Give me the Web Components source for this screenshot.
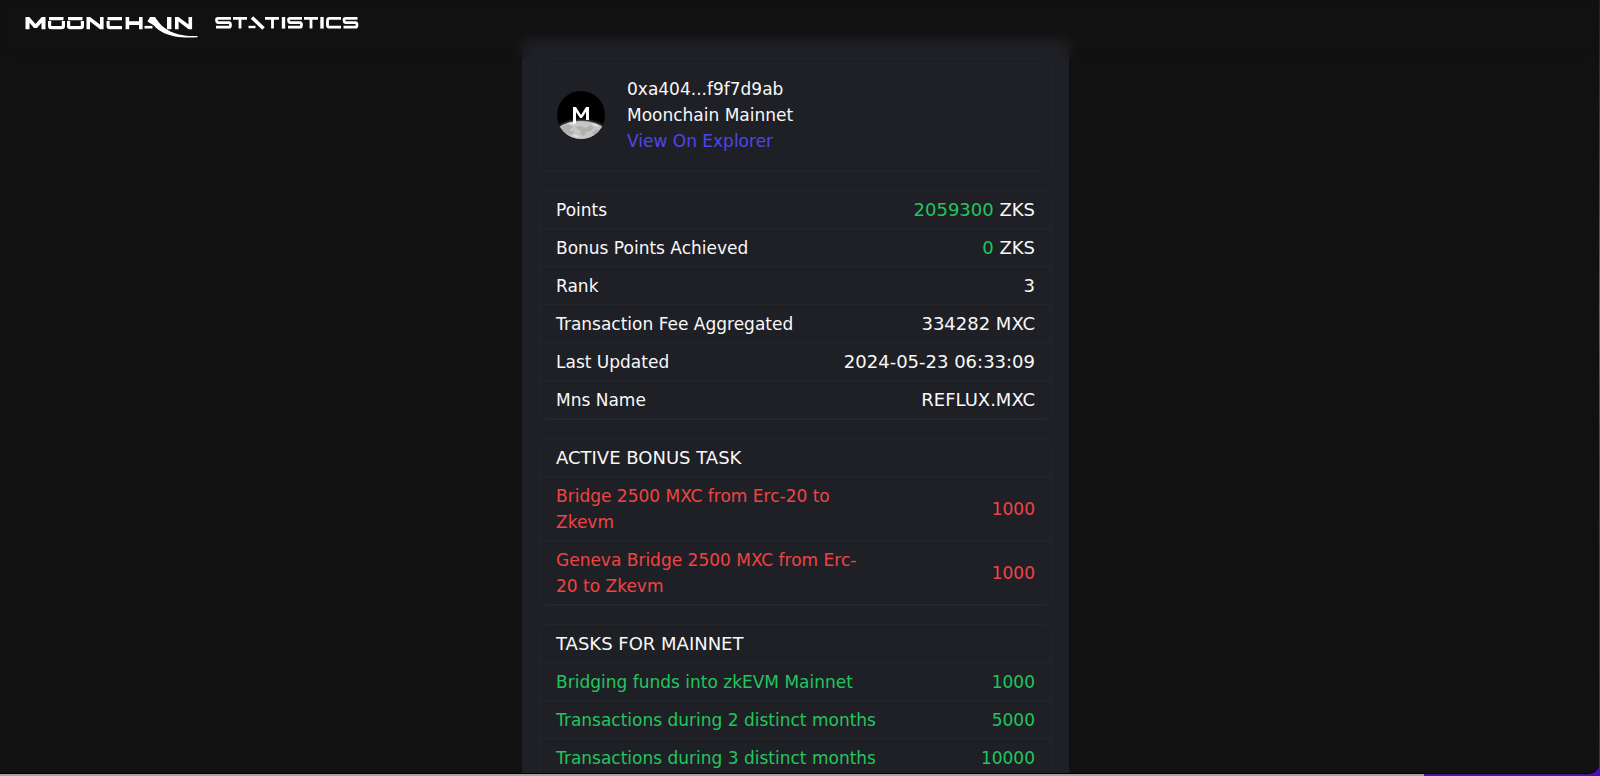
<!DOCTYPE html>
<html lang="en">
<head>
<meta charset="utf-8">
<title>Moonchain Statistics</title>
<style>
  html, body { margin: 0; height: 100%; }
  body {
    overflow: hidden;
    font-family: "DejaVu Sans", Verdana, sans-serif;
    color: #f8f8f9;
    background:
      linear-gradient(to right, #a5a3a5 89%, #4a12a8 89%) bottom / 100% 3px no-repeat,
      linear-gradient(#2a1a20, #8a5068 40%, #6a2880 60%, #4a10c0);
  }
</style>
</head>
<body>
<stats-app></stats-app>

<script>
const define = (name, html) => {
  const template = document.createElement('template');
  template.innerHTML = html;
  customElements.define(name, class extends HTMLElement {
    constructor() {
      super();
      this.attachShadow({ mode: 'open' }).append(template.content.cloneNode(true));
    }
  });
};

/* Wordmark: extended techno lettering with a tail sweeping from the A */
define('brand-logo', `
  <style>
    :host { display: block; }
    svg { display: block; width: 340px; height: 28px; overflow: visible; }
  </style>
  <svg viewBox="0 0 340 28" role="img" aria-label="Moonchain Statistics" fill="none" stroke="#fff">
    <path fill="#fff" stroke="none" d="M1.500 13.200V1h3.800l6.200 7L17.700 1h3.800v12.200h-4V6.800l-4.500 5.200h-3L5.500 6.800v6.400z"/>
    <g stroke-width="3.200">
      <path d="M25 2.600h14.500M25.600 5v5q0 1.600 1.800 1.600h10.200q1.800 0 1.800-1.600V5"/>
      <path d="M44 2.600h14.500M44.600 5v5q0 1.600 1.800 1.600h10.200q1.800 0 1.800-1.600V5"/>
      <path d="M98 2.600H83.500M84.100 5v5q0 1.600 1.800 1.600H98"/>
      <path d="M103.400 1v12.200M116.800 1v12.200M103 7.100h14" stroke-width="3.600"/>
      <path d="M120.500 11.200h8" stroke-width="2.600"/>
      <path d="M145.200 1v12.200" stroke-width="4.400"/>
    </g>
    <g fill="#fff" stroke="none">
      <path d="M62.500 13.200V1h3.500l10 7.600V1h3.600v12.200h-3.500L66 5.600v7.600z"/>
      <path d="M151 13.200V1h3.500l10 7.600V1h3.600v12.200h-3.500l-10-7.600v7.600z"/>
      <path d="M126 1h5c6 10 17 20 42.500 19v1.200c-27 2.200-39-6-43.500-11.700L123.500 5.500z"/>
    </g>
    <g stroke-width="2.800">
      <path d="M207 2.400h-13q-1.500 0-1.500 1.900t1.500 2.300h11q1.500 0 1.500 2.300t-1.500 2.300H192"/>
      <path d="M209 2.400h14M216 2v10.600"/>
      <path d="M224.500 11h7" stroke-width="2.400"/><path d="M228 1.500l11.500 11" stroke-width="3.600"/>
      <path d="M241 2.400h14M248.500 2v10.600"/>
      <path d="M259.500 1v11.600" stroke-width="3.400"/>
      <path d="M278 2.400h-12q-1.500 0-1.500 1.900t1.500 2.300h10q1.500 0 1.500 2.300t-1.500 2.300H264"/>
      <path d="M280 2.400h14M287 2v10.600"/>
      <path d="M298 1v11.600" stroke-width="3.400"/>
      <path d="M317 2.400h-11.500q-2 0-2 2v4.800q0 2 2 2H317"/>
      <path d="M333.500 2.400h-12q-1.500 0-1.500 1.900t1.500 2.300h10q1.500 0 1.500 2.300t-1.500 2.300H319.500"/>
    </g>
  </svg>
`);

/* Round network picture: the letter M above a moon horizon */
define('moon-avatar', `
  <style>
    :host { display: block; }
    svg { display: block; width: 48px; height: 48px; }
  </style>
  <svg viewBox="0 0 48 48" aria-hidden="true">
    <defs>
      <clipPath id="disc"><circle cx="24" cy="24" r="24"/></clipPath>
      <filter id="glow"><feGaussianBlur stdDeviation="1.500"/></filter>
    </defs>
    <g clip-path="url(#disc)">
      <path fill="#000" d="M0 0h48v48H0z"/>
      <ellipse cx="24" cy="58" rx="36" ry="28.500" fill="#999" filter="url(#glow)"/>
      <ellipse cx="24" cy="58" rx="36" ry="28" fill="#c6c6c6"/>
      <path fill="#b0b0b0" d="M5 36l6-3 5 3-4 3 6 2-5 3-8-4zM19 36l5-1 5 2 4-3 4 2-3 4-5 1-2 4-4-2 1-3-5-3zM35 42l5-4 4 2-6 6z"/>
      <path fill="#dcdcdc" d="M10 32l7-1 2 2-6 1zM34 32l6 1 2 3-5-1zM17 43l5 2-1 2-5-2z"/>
      <path fill="#fff" d="M16 34V16h3l5 8 5-8h3v13h-3v-8l-4 6h-2l-4-6v11z"/>
    </g>
  </svg>
`);

define('site-header', `
  <style>
    :host {
      display: block; position: absolute; inset: 0 0 auto 0; z-index: 1;
      box-sizing: border-box; height: 59px; padding: 16px 24px;
      backdrop-filter: blur(6px);
    }
    a { display: inline-block; color: inherit; }
  </style>
  <header><a href="#" aria-label="Moonchain Statistics"><brand-logo></brand-logo></a></header>
`);

define('info-card', `
  <style>
    :host {
      display: block; border: 1px solid #26272b; border-radius: 10px;
      overflow: hidden;
    }
  </style>
  <slot></slot>
`);

define('profile-summary', `
  <style>
    :host {
      display: flex; align-items: center; gap: 22px;
      padding: 17px; font-size: 17px; line-height: 26px;
    }
    a { color: #4f46e5; text-decoration: none; }
  </style>
  <moon-avatar></moon-avatar>
  <div>
    <div><slot name="address"></slot></div>
    <div><slot name="network"></slot></div>
    <a href="#">View On Explorer</a>
  </div>
`);

/* A table of label/value rows; tone colours the body, heading tops it */
customElements.define('data-table', class extends HTMLElement {
  static rows = {
    summary: [
      ['Points', '<b>2059300</b> ZKS'],
      ['Bonus Points Achieved', '<b>0</b> ZKS'],
      ['Rank', '3'],
      ['Transaction Fee Aggregated', '334282 MXC'],
      ['Last Updated', '2024-05-23 06:33:09'],
      ['Mns Name', 'REFLUX.MXC']
    ],
    bonus: [
      ['Bridge 2500 MXC from Erc-20 to Zkevm', '1000'],
      ['Geneva Bridge 2500 MXC from Erc-20 to Zkevm', '1000']
    ],
    mainnet: [
      ['Bridging funds into zkEVM Mainnet', '1000'],
      ['Transactions during 2 distinct months', '5000'],
      ['Transactions during 3 distinct months', '10000']
    ]
  };
  connectedCallback() {
    const heading = this.getAttribute('heading');
    const body = this.constructor.rows[this.getAttribute('source')]
      .map(([label, value]) => `<tr><th scope="row"><span>${label}</span></th><td>${value}</td></tr>`).join('');
    this.attachShadow({ mode: 'open' }).innerHTML = `
      <style>
        :host { display: block; line-height: 26px; }
        :host([tone="red"]) { --tone: #ef4444; }
        :host([tone="green"]) { --tone: #22c55e; }
        table { width: 100%; border-collapse: separate; border-spacing: 0; }
        th, td {
          padding: 6px 16px 5px; border-bottom: 1px solid #26272b;
          font-weight: 400; text-align: left; vertical-align: middle;
        }
        thead th, td { font-size: 18px; }
        tbody { color: var(--tone, inherit); }
        tbody th { font-size: 17px; padding-right: 0; }
        tbody span { display: block; max-width: 321px; }
        td { text-align: right; white-space: nowrap; }
        :host([tone]) td { font-size: 17px; }
        b { font-weight: 400; color: #22c55e; }
      </style>
      <table>
        ${heading ? `<thead><tr><th colspan="2" scope="col">${heading}</th></tr></thead>` : ''}
        <tbody>${body}</tbody>
      </table>`;
  }
});

define('stats-panel', `
  <style>
    :host {
      display: flex; flex-direction: column; gap: 18px;
      box-sizing: border-box; width: 100%; max-width: 547px;
      margin: 40px auto 0; padding: 18px 17px;
      background: #1f2025;
    }
  </style>
  <slot></slot>
`);

define('stats-app', `
  <style>
    :host {
      display: block; position: relative; box-sizing: border-box;
      height: calc(100vh - 2px); margin-right: 1px; padding-right: 8px;
      overflow: hidden; background: #111;
      border-bottom: 1px solid #000; border-bottom-right-radius: 10px;
    }
    main { display: flow-root; }
  </style>
  <site-header></site-header>
  <main>
    <stats-panel>
      <info-card>
        <profile-summary>
          <span slot="address">0xa404...f9f7d9ab</span>
          <span slot="network">Moonchain Mainnet</span>
        </profile-summary>
      </info-card>
      <info-card><data-table source="summary"></data-table></info-card>
      <info-card><data-table source="bonus" heading="ACTIVE BONUS TASK" tone="red"></data-table></info-card>
      <info-card><data-table source="mainnet" heading="TASKS FOR MAINNET" tone="green"></data-table></info-card>
    </stats-panel>
  </main>
`);
</script>
</body>
</html>
